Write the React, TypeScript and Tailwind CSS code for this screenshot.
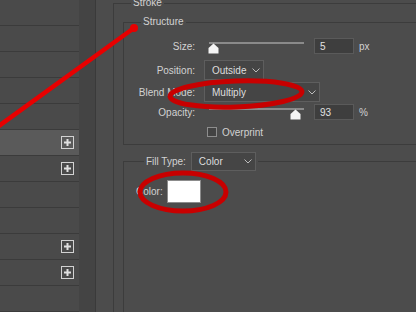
import React from "react";

const rows = [false, false, false, false, false, true, true, false, false, true, true, false];

function PlusBox() {
  return (
    <svg width="13" height="13" viewBox="0 0 13 13">
      <rect x="0.5" y="0.5" width="12" height="12" fill="none" stroke="#d2d2d2" />
      <path d="M6.5 3v7M3 6.5h7" stroke="#e0e0e0" strokeWidth="2" />
    </svg>
  );
}

function Chevron() {
  return (
    <svg width="8" height="5" viewBox="0 0 8 5">
      <polyline points="0.5,0.5 4,4 7.5,0.5" fill="none" stroke="#bcbcbc" strokeWidth="1" />
    </svg>
  );
}

function Select({ value, width, height = "h-[20px]" }: { value: string; width: string; height?: string }) {
  return (
    <div className={`${width} ${height} flex items-center justify-between border border-[#5e5e5e] bg-[#454545] pl-[7px] pr-[3px] text-[#dedede]`}>
      <span>{value}</span>
      <Chevron />
    </div>
  );
}

function Slider({ value, max }: { value: number; max: number }) {
  const left = (value / max) * (100 - 11);
  return (
    <div className="relative w-[100px] h-[16px]">
      <div className="ml-[2px] mt-[4px] h-[2px] w-[95px] bg-[#8a8a8a]" />
      <svg className="absolute top-[5px]" style={{ left }} width="11" height="11" viewBox="0 0 11 11">
        <path d="M5.5 0.5 L10.5 5 L10.5 10.5 L0.5 10.5 L0.5 5 Z" fill="#f4f4f4" />
      </svg>
    </div>
  );
}

function NumberBox({ value }: { value: string }) {
  return (
    <div className="w-[40px] h-[16px] flex items-center border border-[#5a5a5a] bg-[#3e3e3e] pl-[5px] text-[#e2e2e2]">
      {value}
    </div>
  );
}

function Label({ children }: { children: React.ReactNode }) {
  return <span className="w-[72px] shrink-0 text-right pr-[1px]">{children}</span>;
}

export default function App() {
  return (
    <div className="relative w-[416px] h-[312px] overflow-hidden flex bg-[#4c4c4c] text-[10px] text-[#d2d2d2] font-['Liberation_Sans',Arial,sans-serif]">
      <div className="w-[79px] shrink-0 flex flex-col">
        {rows.map((plus, i) => (
          <div
            key={i}
            className={`h-[26px] shrink-0 flex items-center justify-end pr-[5px] border-b border-[#3b3b3b] ${i === 5 ? "bg-[#5a5a5a]" : "bg-[#4a4a4a]"}`}
          >
            {plus && <PlusBox />}
          </div>
        ))}
      </div>
      <div className="w-[16px] shrink-0 bg-[#444444]" />
      <div className="flex-1 overflow-hidden border-l border-[#3a3a3a] bg-[#4c4c4c] pl-[17px]">
        <fieldset className="-mt-[4px] w-[330px] h-[340px] border border-[#3c3c3c] pl-[9px] pt-[5px]">
          <legend className="ml-[8px] px-[2px] leading-[14px]">Stroke</legend>

          <fieldset className="w-[310px] border border-[#3c3c3c] pt-[8px] pb-[3px]">
            <legend className="ml-[17px] px-[2px] leading-[14px]">Structure</legend>

            <div className="flex items-center h-[18px] gap-[3px]">
              <Label>Size:</Label>
              <div className="flex items-center ml-[8px]">
                <Slider value={4} max={250} />
                <div className="ml-[7px]">
                  <NumberBox value="5" />
                </div>
                <span className="ml-[5px]">px</span>
              </div>
            </div>

            <div className="flex items-center h-[20px] mt-[5px] gap-[8px]">
              <Label>Position:</Label>
              <Select value="Outside" width="w-[60px]" />
            </div>

            <div className="flex items-center h-[20px] mt-[2px] gap-[8px]">
              <Label>Blend Mode:</Label>
              <Select value="Multiply" width="w-[116px]" />
            </div>

            <div className="flex items-center h-[18px] mt-[1px] gap-[3px]">
              <Label>Opacity:</Label>
              <div className="flex items-center ml-[8px]">
                <Slider value={93} max={100} />
                <div className="ml-[7px]">
                  <NumberBox value="93" />
                </div>
                <span className="ml-[5px]">%</span>
              </div>
            </div>

            <div className="flex items-center h-[18px] mt-[2px]">
              <div className="w-[83px] shrink-0" />
              <div className="w-[10px] h-[10px] border border-[#8e8e8e] bg-[#434343]" />
              <span className="ml-[5px]">Overprint</span>
            </div>
          </fieldset>

          <fieldset className="mt-[7px] w-[310px] h-[200px] border border-[#3c3c3c] pl-[12px] pt-[9px]">
            <legend className="ml-[8px] px-[2px]">
              <div className="flex items-center gap-[5px]">
                <span>Fill Type:</span>
                <Select value="Color" width="w-[65px]" height="h-[19px]" />
              </div>
            </legend>
            <div className="flex items-center gap-[4px]">
              <span>Color:</span>
              <div className="w-[34px] h-[23px] bg-white border border-[#8c8c8c]" />
            </div>
          </fieldset>
        </fieldset>
      </div>

      <svg className="absolute inset-0 pointer-events-none" width="416" height="312" viewBox="0 0 416 312">
        <line x1="-4" y1="128" x2="134" y2="28" stroke="#e80000" strokeWidth="4.5" strokeLinecap="round" />
        <circle cx="134" cy="28" r="4" fill="#e80000" />
        <ellipse cx="236" cy="94" rx="66" ry="13" fill="none" stroke="#c80000" strokeWidth="5" transform="rotate(-2 236 94)" />
        <ellipse cx="183" cy="192" rx="43" ry="19" fill="none" stroke="#c80000" strokeWidth="5" />
      </svg>
    </div>
  );
}
